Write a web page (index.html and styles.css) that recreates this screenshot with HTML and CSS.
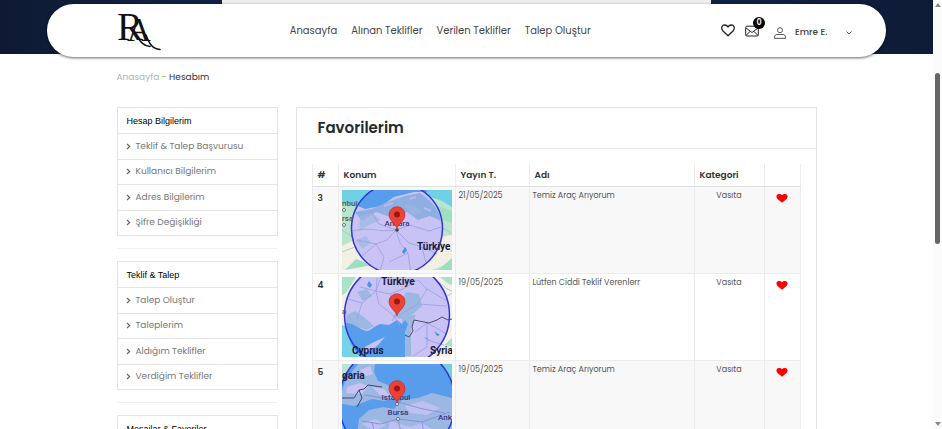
FILE: index.html
```html
<!DOCTYPE html>
<html lang="tr">
<head>
<meta charset="utf-8">
<meta name="viewport" content="width=device-width, initial-scale=1">
<title>Hesabım - Favorilerim</title>
<link rel="stylesheet" href="styles.css">
</head>
<body>
<svg class="defs" aria-hidden="true">
  <symbol id="heart" viewBox="0 0 12 11"><path d="M6 9.800 1.500 6C-.4 4 .4 1 2.900 1 4.300 1 5.300 1.500 6 2.300 6.700 1.500 7.700 1 9.100 1c2.500 0 3.300 3 1.400 5z" fill="#f00"/></symbol>
  <symbol id="pin" viewBox="0 0 18 24"><path d="M9 23C8.500 18.500 1 15 1 8.700a8 8 0 0 1 16 0C17 15 9.500 18.500 9 23z" fill="#ea4335" stroke="#c5221f" stroke-width=".6"/><circle cx="9" cy="8.500" r="3" fill="#a21414"/></symbol>
  <symbol id="arrow" viewBox="0 0 5 7"><path d="m1 1 2.600 2.500L1 6" fill="none" stroke="#666" stroke-width="1.200"/></symbol>
</svg>
<div class="window">
  <div class="page">
    <div class="hero">
      <div class="hero-slot"></div>
      <header class="bar">
        <a class="logo" href="#" aria-label="RA">
          <svg viewBox="0 0 44 40" width="44" height="40">
            <text class="logo-r" x="0" y="29">R</text>
            <text class="logo-a" x="10" y="30">A</text>
            <path d="M19 24C23 30 26 35 33 35.500M29 24C32 32 35 38 43 38.500" fill="none" stroke="#111" stroke-width="1.600" stroke-linecap="round"/>
          </svg>
        </a>
        <nav class="menu">
          <a href="#">Anasayfa</a>
          <a href="#">Alınan Teklifler</a>
          <a href="#">Verilen Teklifler</a>
          <a href="#">Talep Oluştur</a>
        </nav>
        <div class="tools">
          <a href="#" class="tool" aria-label="Favoriler"><svg width="14" height="13" viewBox="0 0 14 13"><path d="M7 11.800 2 7C-.5 4 .9 1 3.800 1 5.300 1 6.300 1.700 7 2.800 7.700 1.700 8.700 1 10.200 1 13.100 1 14.500 4 12 7z" fill="none" stroke="#222" stroke-width="1.300"/></svg></a>
          <a href="#" class="tool" aria-label="Mesajlar"><svg width="14" height="12" viewBox="0 0 14 12"><g fill="none" stroke="#222"><rect x=".7" y="1.200" width="12.600" height="9.800" rx="1.200"/><path d="m1 3 6 4.500L13 3M1 10.500 5.300 6.200M13 10.500 8.700 6.200"/></g></svg><span class="badge">0</span></a>
          <button class="user" type="button">
            <svg width="12" height="12" viewBox="0 0 12 12"><g fill="none" stroke="#555"><circle cx="6" cy="3.200" r="2.500"/><path d="M.6 11.400V10C.6 8.300 1.700 7.500 3 7.500h6c1.300 0 2.400.8 2.400 2.500v1.400z"/></g></svg>
            <span>Emre E.</span>
            <svg class="caret" width="6" height="4" viewBox="0 0 6 4"><path d="m.5.5 2.500 2.500L5.500.5" fill="none" stroke="#555"/></svg>
          </button>
        </div>
      </header>
    </div>

    <div class="container">
      <nav class="crumbs"><a href="#">Anasayfa</a> <i>-</i> <span>Hesabım</span></nav>
      <div class="columns">
        <aside class="side">
          <section class="box">
            <h2>Hesap Bilgilerim</h2>
            <a href="#"><svg><use href="#arrow"/></svg>Teklif &amp; Talep Başvurusu</a>
            <a href="#"><svg><use href="#arrow"/></svg>Kullanıcı Bilgilerim</a>
            <a href="#"><svg><use href="#arrow"/></svg>Adres Bilgilerim</a>
            <a href="#"><svg><use href="#arrow"/></svg>Şifre Değişikliği</a>
          </section>
          <hr>
          <section class="box">
            <h2>Teklif &amp; Talep</h2>
            <a href="#"><svg><use href="#arrow"/></svg>Talep Oluştur</a>
            <a href="#"><svg><use href="#arrow"/></svg>Taleplerim</a>
            <a href="#"><svg><use href="#arrow"/></svg>Aldığım Teklifler</a>
            <a href="#"><svg><use href="#arrow"/></svg>Verdiğim Teklifler</a>
          </section>
          <hr>
          <section class="box">
            <h2>Mesajlar &amp; Favoriler</h2>
          </section>
        </aside>

        <main class="panel">
          <h1>Favorilerim</h1>
          <table>
            <colgroup><col class="c-no"><col class="c-map"><col class="c-date"><col class="c-name"><col class="c-cat"><col class="c-fav"></colgroup>
            <thead><tr><th>#</th><th>Konum</th><th>Yayın T.</th><th>Adı</th><th>Kategori</th><th></th></tr></thead>
            <tbody>
              <tr>
                <th>3</th>
                <td class="map"><svg viewBox="0 0 110 80" role="img" aria-label="Ankara">
                  <rect width="110" height="80" fill="#b9e5cf"/>
                  <path d="M0 0h110v17L98 10 88 7 76 0 60 4 44 12 28 20 14 17 0 13z" fill="#6fd0e6"/>
                  <path d="M0 56 12 50 28 58 45 50 75 50 110 45V72L90 80H0z" fill="#f3efe2"/>
                  <path d="M3 80 14 69l16 6M96 80l14-12v12zM88 13l22 8v12L98 29z" fill="#9edfc2"/>
                  <path d="M98 36 110 44M92 49 110 61M0 40l12 8M0 62l13-5" fill="none" stroke="#a9bdc7" stroke-width=".8"/>
                  <circle cx="55" cy="38.500" r="45.500" fill="#c9c3f5"/>
                  <path d="M16 16C26-2 42-7 60-7c12 0 20 3 26 9L72 2 52 7 39 16 23 19z" fill="#579deb"/>
                  <path d="M13 22 30 19 45 12 63 6 78 3C92 12 97 22 99 31L88 26 76 30 65 22 48 27 34 22 20 31z" fill="#8faee2"/>
                  <path d="M18 26l12-3 9 7-14 6-8 6zM61 14l12 2 9 7-11 2zM14 50l10-4 5 7-9 6z" fill="#9bb8e3" opacity=".7"/>
                  <path d="M42 16l9-3M68 9l6-2M82 18l7 3" stroke="#b9b9ee" stroke-width="2" fill="none"/>
                  <path d="M11 41c15-5 26 2 43-1l14-5 19 6 12-4M54 40 45 50 34 54 20 66M54 40l4 13 8 10 3 20M54 40l13 13 13 4 15 7M34 54 15 50M34 54l8 13-4 14M28 20l9 14 17 6M66 63l-19 9M80 57l4 16" stroke="#9b9de2" stroke-width=".8" fill="none"/>
                  <path d="m63 57 2 3-3 4-2-2z" fill="#4294ea"/>
                  <circle cx="55" cy="38.500" r="45.500" fill="none" stroke="#3036df" stroke-width="1.500"/>
                  <circle cx="2" cy="20" r="1.500" class="dot"/><circle cx="2" cy="35" r="1.500" class="dot"/>
                  <text class="town" x="0" y="16">nbul</text><text class="town" x="0" y="31">rsa</text>
                  <text class="city" x="55" y="36" text-anchor="middle">Ankara</text>
                  <circle cx="55" cy="40" r="1.800" fill="#444"/>
                  <text class="land" x="75" y="60">Türkiye</text>
                  <use href="#pin" x="46" y="16" width="18" height="24"/>
                </svg></td>
                <td>21/05/2025</td><td>Temiz Araç Arıyorum</td><td class="cat">Vasıta</td>
                <td class="fav"><button type="button" aria-label="Favoriden çıkar"><svg width="12" height="11"><use href="#heart"/></svg></button></td>
              </tr>
              <tr>
                <th>4</th>
                <td class="map"><svg viewBox="0 0 110 80" role="img" aria-label="Türkiye, Cyprus, Syria">
                  <rect width="110" height="80" fill="#f5f1e8"/>
                  <path d="M0 0h14L4 16 0 18zM98 0h12v8l-5-2M102 68l8-7v9z" fill="#a8e2c7"/><path d="M0 48l5 2 12 30H0z" fill="#76d2e5"/>
                  <path d="M97 5l8 7 5 2M104 20l6-4" stroke="#a9bdc7" stroke-width=".8" fill="none"/>
                  <circle cx="55" cy="38" r="52.500" fill="#c9c3f5"/>
                  <path d="m64 15 13 2 3 12-9 8-12 5-8-2 5-10zM15 15l10-3 5 7-9 5zM5 38l8-4 9 6 10 9-8 4-20-7zM60 38h14l-5 13v28h-8z" fill="#9bb8e3"/>
                  <path d="M4 46c8 0 13 6 20 8 5 0 8-5 14-7l9 1 8-5 5 4 3-4 3 4-3 8v25H18C10 71 5 60 4 46z" fill="#579deb"/>
                  <path d="m23 70 7-4 13-6-7 8-7 6-6 1z" fill="#c9c3f5"/>
                  <path d="M6 22l14 4 14-12 14 3 13-5 14-9M20 26l-5 16M34 14l3 13 14 11 7 10M48 17l8 17-6 10M76 3 85 12 76 27 59 37M85 12l20 12M76 27l29 2M73 55l12-9 20 11M85 46v24l-14 9M85 63l17 5M34 14 35 1M39 0l-5 14-16-4" stroke="#9b9de2" stroke-width=".8" fill="none"/>
                  <path d="m27 4 3 4-2 3-3-3zM92 54l6 4-3 1zM82 60l6 3-4-1z" fill="#4294ea"/>
                  <path d="m63 58 4 2 4-6-1-4 2-7 5 1 10 2 8-3 5-3 6 3 4-1" fill="none" stroke="#4d4a71" stroke-width="1"/>
                  <circle cx="55" cy="38" r="52.500" fill="none" stroke="#3036df" stroke-width="1.500"/>
                  <text class="town" x="0" y="37">a</text>
                  <text class="land" x="56" y="8" text-anchor="middle">Türkiye</text>
                  <text class="land" x="10" y="77">Cyprus</text><text class="land" x="88" y="77">Syria</text>
                  <use href="#pin" x="46" y="16" width="18" height="24"/>
                </svg></td>
                <td>19/05/2025</td><td>Lütfen Ciddi Teklif Verenlerr</td><td class="cat">Vasıta</td>
                <td class="fav"><button type="button" aria-label="Favoriden çıkar"><svg width="12" height="11"><use href="#heart"/></svg></button></td>
              </tr>
              <tr>
                <th>5</th>
                <td class="map"><svg viewBox="0 0 110 80" role="img" aria-label="İstanbul, Bursa">
                  <rect width="110" height="80" fill="#77cfe2"/><path d="M0 0h14L3 19H0z" fill="#b9e5cf"/>
                  <circle cx="55" cy="38" r="58" fill="#579deb"/>
                  <path d="M4 15 16 0h17l-1 8 4 9 10 4 9 12-13 4-12-2-18 7-16-3z" fill="#9bb8e3"/>
                  <path d="M18 6l10-4 3 8-7 2zM5 23l13-4 8 3-6 8-16-1zM30 23l12 2 6 7-10-1z" fill="#c9c3f5"/>
                  <path d="m17 55 10-9 14-3 11 2 8-9 16-2 14-5 20 5v46H14z" fill="#9bb8e3"/>
                  <path d="m20 60 13-5 11 6-11 6zM63 42l18-5 17 7-13 7-17-2zM48 57l20 6 12-4 13 8-9 13H44zM24 73l10-3 4 10H24z" fill="#c9c3f5" opacity=".75"/>
                  <path d="m19 44 9-4 11-1-7 4-9 4z" fill="#579deb"/>
                  <path d="M0 34 12 34l5-8 5-1 4-4 14 2M17 26l3 8-5 9" fill="none" stroke="#46436b" stroke-width="1"/>
                  <path d="M22 31 42 34l12 6M20 57l18 3 18-5 24 3 28-10M56 56l6 24M56 38l25 7 22 4M30 58l5 22M80 58l4 22" fill="none" stroke="#8487d5" stroke-width=".8"/>
                  <circle cx="55" cy="38" r="58" fill="none" stroke="#3036df" stroke-width="1.500"/>
                  <text class="land" x="0" y="15">garia</text>
                  <text class="city" x="54" y="36" text-anchor="middle">Istanbul</text>
                  <text class="city" x="56" y="51" text-anchor="middle">Bursa</text>
                  <text class="city" x="96" y="56">Ank</text>
                  <circle cx="56" cy="55" r="1.500" class="dot"/><circle cx="55" cy="40" r="1.500" class="dot"/>
                  <use href="#pin" x="46" y="16" width="18" height="24"/>
                </svg></td>
                <td>19/05/2025</td><td>Temiz Araç Arıyorum</td><td class="cat">Vasıta</td>
                <td class="fav"><button type="button" aria-label="Favoriden çıkar"><svg width="12" height="11"><use href="#heart"/></svg></button></td>
              </tr>
            </tbody>
          </table>
        </main>
      </div>
    </div>
  </div>
  <div class="scroll" aria-hidden="true">
    <svg width="6" height="4" viewBox="0 0 6 4"><path d="M0 4h6L3 0z" fill="#888"/></svg>
    <div class="track"><div class="thumb"></div></div>
    <svg width="6" height="4" viewBox="0 0 6 4"><path d="M0 0h6L3 4z" fill="#888"/></svg>
  </div>
</div>
</body>
</html>
```

FILE: styles.css
```css
* { box-sizing: border-box; }
body {
  margin: 0;
  font-family: Poppins, Inter, "Open Sans", sans-serif;
  font-size: 9px;
  color: #555;
  background: #fff;
}
a { color: inherit; text-decoration: none; }
button { font: inherit; color: inherit; background: none; border: 0; padding: 0; }
svg { display: block; flex: none; }
.defs { position: absolute; width: 0; height: 0; }

.window { display: flex; height: 100vh; overflow: hidden; }
.page { flex: 1; min-width: 0; overflow: hidden; }

.hero { height: 54px; background: linear-gradient(90deg, #0e1a33, #10244a 30%, #10244a 70%, #0e1b36); }
.hero-slot { height: 4px; width: 489px; margin-left: 222px; background: #ededed; }
.bar {
  display: flex;
  align-items: center;
  width: 90%;
  height: 53px;
  margin: 0 auto;
  padding: 0 34px 0 70px;
  border-radius: 27px;
  background: #fff;
  box-shadow: 0 1px 3px rgba(0, 0, 0, .6);
}
.logo { width: 173px; }
.logo svg { overflow: visible; }
.logo-r { font: 39px "Liberation Serif", serif; fill: #111; }
.logo-a { font: 33px "Liberation Serif", serif; fill: #111; }
.menu { display: flex; gap: 14px; font-size: 10px; color: #444; white-space: nowrap; }
.tools { display: flex; align-items: center; gap: 10px; margin-left: auto; }
.tool { position: relative; }
.badge {
  position: absolute;
  top: -8px;
  right: -6px;
  width: 12px;
  height: 12px;
  border-radius: 50%;
  background: #000;
  color: #fff;
  font-size: 8px;
  font-weight: 600;
  line-height: 12px;
  text-align: center;
}
.user { display: flex; align-items: center; gap: 9px; margin: 4px 0 0 5px; font-weight: 500; color: #444; white-space: nowrap; }
.caret { margin-left: 10px; }

.container { max-width: 700px; margin: 0 auto; }
.crumbs { padding-top: 15px; height: 53px; font-size: 9px; line-height: 16px; color: #333; }
.crumbs a { color: #a9b5bb; }
.crumbs i { color: #7fc25a; font-style: normal; }

.columns { display: flex; align-items: flex-start; gap: 18px; }
.side { flex: 0 0 161px; }
.box { display: grid; grid-template-rows: repeat(5, 1fr); height: 129px; border: 1px solid #e4e4e4; }
.box h2 {
  margin: 0;
  padding-left: 9px;
  display: flex;
  align-items: center;
  font: 400 9px "Liberation Sans", sans-serif;
  color: #000;
}
.box a { display: flex; align-items: center; gap: 5px; padding-left: 8px; border-top: 1px solid #e4e4e4; color: #777; }
.box svg { width: 5px; height: 7px; }
.side hr { height: 1px; margin: 12px 0; border: 0; background: #f0f0f0; }

.panel { flex: 1; min-width: 0; border: 1px solid #e4e4e4; }
.panel h1 {
  margin: 0;
  padding-left: 21px;
  font-size: 15px;
  line-height: 40px;
  font-weight: 600;
  color: #212b32;
  border-bottom: 1px solid #e8e8e8;
}
table { width: calc(100% - 30px); margin: 15px; table-layout: fixed; border-collapse: collapse; font-size: 8px; line-height: 12px; }
.c-no { width: 26px; }
.c-map { width: 117px; }
.c-date { width: 74px; }
.c-cat { width: 70px; }
.c-fav { width: 36px; }
th, td { padding: 3px; text-align: left; vertical-align: top; border: solid #ececec; border-width: 0 1px 1px; white-space: nowrap; }
th { padding: 5px; font-size: 9px; font-weight: 600; color: #333; }
thead th { border-bottom-color: #e0e0e0; }
tbody tr:nth-child(odd) { background: #f8f8f8; }
.map svg { width: 110px; height: 80px; overflow: hidden; }
.cat { text-align: center; }
.fav button { display: block; margin: 3px auto; }
.town { font: 500 8px Roboto, sans-serif; fill: #555; }
.city { font: 500 8px Roboto, sans-serif; fill: #3d3976; }
.land { font: 700 10px Roboto, sans-serif; fill: #1c1b3a; }
.dot { fill: #fff; stroke: #555; stroke-width: .8px; }

.scroll { flex: 0 0 9px; display: flex; flex-direction: column; align-items: center; padding: 3px 0; background: #fbfbfb; }
.track { flex: 1; display: flex; flex-direction: column; padding-top: 66px; }
.thumb { width: 5px; height: 49%; border-radius: 3px; background: #666; }
```
